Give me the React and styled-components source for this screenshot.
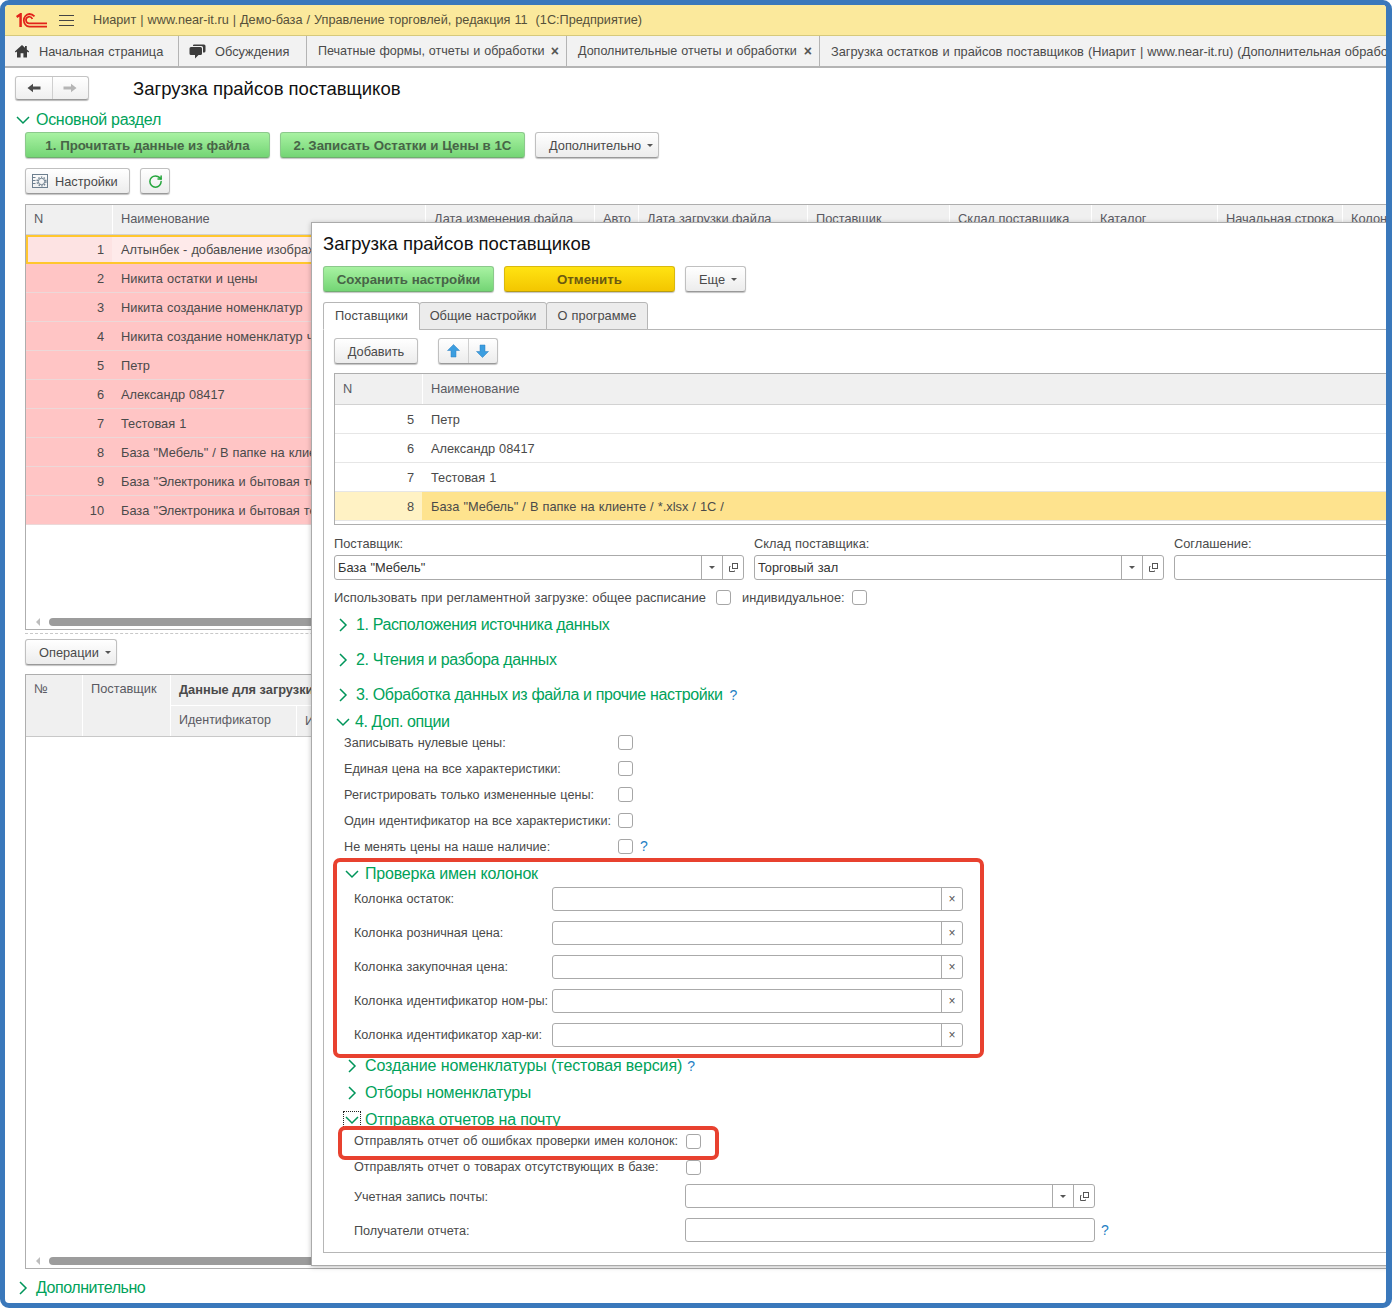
import React from 'react';
import styled, { createGlobalStyle } from 'styled-components';
import { RotateCw } from 'lucide-react';

const Global = createGlobalStyle`
  html, body { margin: 0; padding: 0; background: #fff; }
  * { box-sizing: border-box; }
  body { font-family: "Liberation Sans", Arial, sans-serif; font-size: 12.8px; word-spacing: 0.5px; color: #4a4a4a; }
`;

const Frame = styled.div`
  position: relative; width: 1392px; height: 1308px; overflow: hidden;
  border-style: solid; border-color: #3a78bb; border-width: 5px 6px 5px 5px; border-radius: 9px;
  background: #fff; display: flex; flex-direction: column;
`;
const TitleBar = styled.div`
  height: 31px; flex: none; background: #fbe99c; border-bottom: 1px solid #d6c97c;
  display: flex; align-items: center; padding-left: 11px; color: #55503a; font-size: 12.7px; white-space: pre;
`;
const Logo = styled.svg`width: 31px; height: 15px; flex: none;`;
const Burger = styled.svg`width: 15px; height: 13px; margin: 0 19px 0 12px; flex: none;`;
const TabBar = styled.div`
  height: 32px; flex: none; background: #f2f2f2; border-bottom: 2px solid #b4b4b4; display: flex; white-space: nowrap;
`;
const AppTab = styled.div`
  width: ${p => p.$w}px; flex: none; display: flex; align-items: center; padding-left: ${p => p.$pl}px;
  border-right: 1px solid #b4b4b4; color: #4a4a4a; position: relative; font-size: ${p => p.$fs ?? 12.8}px;
  ${p => p.$last && 'border-right: none; overflow: hidden;'}
`;
const TabIcon = styled.svg`width: ${p => p.$s}px; height: 16px; margin-right: ${p => p.$mr}px; flex: none;`;
const TabClose = styled.span`position: absolute; right: 7px; top: 7px; font-weight: bold; font-size: 14px; color: #555; line-height: 16px;`;

const Body = styled.div`flex: 1; padding-left: 10px; min-height: 0;`;
const NavRow = styled.div`display: flex; align-items: center; height: 24px; margin-top: 8px; gap: 44px;`;
const NavGroup = styled.div`
  width: 74px; height: 24px; display: flex; border: 1px solid #c4c4c4; border-bottom-color: #999; border-radius: 3px;
  background: linear-gradient(#fff, #efefef); box-shadow: 0 1px 1px #bbb;
`;
const NavCell = styled.div`
  flex: 1; display: flex; align-items: center; justify-content: center;
  & + & { border-left: 1px solid #cfcfcf; }
`;
const PageTitle = styled.div`font-size: 18.5px; word-spacing: 0; color: #111; line-height: 24px; white-space: nowrap; padding-top: 1px;`;
const Heading = styled.div`
  position: relative; display: flex; align-items: center; gap: ${p => p.$gap ?? 7}px; height: 20px;
  margin-top: ${p => p.$mt ?? 0}px; margin-left: ${p => p.$ml ?? 0}px;
  color: #00a25a; font-size: 16px; word-spacing: 0; white-space: nowrap; letter-spacing: ${p => p.$ls ?? -0.3}px;
`;
const Chevron = styled.svg`
  width: 14px; height: 14px; margin: 0 -1px; flex: none; fill: none; stroke: #00955a; stroke-width: 1.5;
  ${p => p.$focus && 'outline: 1px dotted #222; outline-offset: 1px;'}
`;
const Hint = styled.span`color: #1f7fc4; font-size: 14px; font-weight: normal; letter-spacing: 0; margin-left: ${p => p.$ml ?? 0}px;`;
const Bar = styled.div`display: flex; gap: 10px; margin-top: ${p => p.$mt}px; margin-left: ${p => p.$ml ?? 10}px; height: 26px;`;
const Button = styled.div`
  width: ${p => p.$w}px; height: 26px; flex: none; display: flex; align-items: center; justify-content: center; gap: ${p => p.$gap ?? 0}px;
  border: 1px solid #c0c0c0; border-bottom-color: #999; border-radius: 3px;
  background: linear-gradient(#fff, #ececec); box-shadow: 0 1px 1px #c4c4c4; color: #4a4a4a; white-space: nowrap;
`;
const StartButton = styled(Button)`justify-content: flex-start; padding-left: ${p => p.$pl ?? 13}px;`;
const GreenButton = styled(Button)`
  background: linear-gradient(#a8f2a2, #74d575); border-color: #8cc98c; border-bottom-color: #6fae6f;
  color: #476447; font-weight: bold; font-size: 13.3px; word-spacing: 0;
`;
const YellowButton = styled(Button)`
  background: linear-gradient(#ffe312, #f3c600); border-color: #d9b90e; border-bottom-color: #b79c10;
  color: #6c5a10; font-weight: bold; font-size: 13.3px;
`;
const Caret = styled.span`
  width: 0; height: 0; border-left: 3px solid transparent; border-right: 3px solid transparent; border-top: 3px solid #555; flex: none;
  margin-left: ${p => p.$ml ?? 6}px;
`;

const Table = styled.div`
  width: 1420px; height: ${p => p.$h}px; margin-top: ${p => p.$mt}px; margin-left: 10px; flex: none;
  border: 1px solid #aeaeae; display: flex; flex-direction: column; background: #fff; white-space: nowrap;
`;
const HeadRow = styled.div`
  display: grid; grid-template-columns: ${p => p.$cols}; height: ${p => p.$h ?? 30}px; flex: none;
  border-bottom: 1px solid #d2d2d2; background: #fff; gap: 1px;
`;
const HeadCell = styled.div`
  background: #f0f0f0; padding-left: 8px; display: flex; align-items: ${p => p.$top ? 'flex-start' : 'center'}; color: #5a5a62; overflow: hidden;
  word-spacing: 0; font-size: ${p => p.$fs ?? 12.8}px;
  ${p => p.$top && 'padding-top: 6px;'}
  ${p => p.$lift && 'padding-bottom: 2px;'}
  ${p => p.$bold && 'font-weight: bold; color: #4a4a4a;'}
  ${p => p.$span && `grid-row: ${p.$span};`}
  ${p => p.$col && `grid-column: ${p.$col};`}
`;
const Row = styled.div`
  display: grid; grid-template-columns: ${p => p.$cols}; height: 29px; flex: none;
  background: ${p => p.$bg ?? '#fff'}; border-bottom: 1px solid ${p => p.$line ?? '#e6e6e6'};
  ${p => p.$current && 'outline: 2px solid #ffc72e; outline-offset: -2px;'}
`;
const NumCell = styled.div`
  display: flex; align-items: center; justify-content: flex-end; padding-right: 8px; color: #4a4a4a;
  background: ${p => p.$bg ?? 'transparent'};
`;
const NameCell = styled.div`
  display: flex; align-items: center; padding-left: 9px; color: #4a4a4a; overflow: hidden;
  background: ${p => p.$bg ?? 'transparent'};
`;
const Scroll = styled.div`display: flex; align-items: center; height: 8px; margin-top: auto; margin-bottom: 3px; padding-left: 10px; flex: none;`;
const ScrollArrow = styled.span`
  width: 0; height: 0; border-top: 4px solid transparent; border-bottom: 4px solid transparent; border-right: 4px solid #bdbdbd; margin-right: 9px;
`;
const Thumb = styled.div`flex: 1; height: 8px; background: #9c9c9c; border-radius: 4px;`;
const Dashed = styled.div`height: 0; width: 1400px; margin: 3px 0 5px 10px; border-top: 1px dashed #c8c8c8;`;
const TwoRowHead = styled(HeadRow)`grid-template-rows: 30px 30px; height: 62px; border-bottom: 1px solid #c8c8c8;`;

const Dialog = styled.div`
  position: absolute; left: 306px; top: 217px; width: 1200px; height: 1044px; background: #fff;
  border: 1px solid #aaa; box-shadow: 0 1px 5px rgba(0,0,0,.25); padding: 10px 0 0 11px; z-index: 5;
`;
const DialogTitle = styled.div`font-size: 18.5px; word-spacing: 0; color: #111; line-height: 22px; white-space: nowrap;`;
const DTabs = styled.div`display: flex; height: 28px; margin-top: 10px; position: relative; z-index: 1; margin-bottom: -1px;`;
const DTab = styled.div`
  width: ${p => p.$w}px; display: flex; align-items: center; justify-content: center; color: #4a4a4a; padding-bottom: 2px;
  border: 1px solid #b6b6b6; border-radius: 3px 3px 0 0; margin-right: -1px; white-space: nowrap;
  background: ${p => p.$active ? '#fff' : '#ececec'}; ${p => p.$active && 'border-bottom-color: #fff;'}
`;
const TabPage = styled.div`border: 1px solid #b6b6b6; height: 924px; padding: 8px 0 0 10px; position: relative;`;
const Toolbar = styled.div`display: flex; gap: 20px; height: 26px;`;
const ArrowGroup = styled.div`
  width: 60px; height: 26px; display: flex; border: 1px solid #c0c0c0; border-bottom-color: #999; border-radius: 3px;
  background: linear-gradient(#fff, #ececec); box-shadow: 0 1px 1px #c4c4c4;
`;
const InnerTable = styled(Table)`width: 1200px; margin-left: 0;`;
const FieldsGrid = styled.div`display: grid; grid-template-columns: 410px 410px 410px; gap: 4px 10px; margin-top: 12px;`;
const FieldLabel = styled.div`height: 14px; line-height: 14px; color: #4a4a4a; white-space: nowrap;`;
const Input = styled.div`
  height: ${p => p.$h ?? 25}px; width: ${p => p.$w ? p.$w + 'px' : 'auto'}; display: flex; align-items: stretch; border: 1px solid #aaa; border-radius: 3px; background: #fff;
  color: #333; flex: none;
`;
const InputText = styled.div`flex: 1; display: flex; align-items: center; padding-left: 3px; white-space: nowrap;`;
const InputBtn = styled.div`
  width: ${p => p.$w ?? 21}px; flex: none; border-left: 1px solid #aaa; display: flex; align-items: center; justify-content: center; color: #555; font-size: 12px;
`;
const Box = styled.span`
  width: 15px; height: 15px; flex: none; border: 1px solid #a6a6a6; border-radius: 3px; background: #fff; display: inline-block;
`;
const CheckLine = styled.div`
  display: flex; align-items: center; height: 16px; margin-top: ${p => p.$mt ?? 0}px; margin-left: ${p => p.$ml ?? 0}px; color: #4a4a4a; white-space: nowrap; position: relative;
`;
const CheckText = styled.span`
  width: ${p => p.$w}px; flex: none; margin-left: ${p => p.$ml ?? 0}px; font-size: ${p => p.$fs ?? 12.65}px;
  ${p => p.$low && 'padding-top: 2px;'}
`;
const Options = styled.div`display: flex; flex-direction: column; gap: 10px; margin-top: 2px;`;
const RedBox = styled.div`
  position: relative; z-index: 2; background: #fff; border: 4px solid #e8412f; border-radius: 7px;
  margin-top: ${p => p.$mt}px; margin-left: ${p => p.$ml}px; width: ${p => p.$w}px; height: ${p => p.$h}px; padding-top: ${p => p.$pt ?? 0}px;
  ${p => p.$center && 'display: flex; align-items: center; padding-bottom: 4px;'}
`;
const ColumnList = styled.div`display: flex; flex-direction: column; gap: 10px; margin-top: 3px;`;
const FormRow = styled.div`
  display: flex; align-items: center; height: 24px; padding-left: ${p => p.$pl}px; margin-top: ${p => p.$mt ?? 0}px; color: #4a4a4a; white-space: nowrap;
`;
const FormLabel = styled.div`width: ${p => p.$w}px; flex: none; font-size: 12.65px; ${p => p.$low && 'padding-top: 2px;'}`;

const ChevronRight = () => <Chevron viewBox="0 0 14 14"><polyline points="4,1 10,7 4,13" /></Chevron>;
const ChevronDown = ({ focus }) => <Chevron $focus={focus} viewBox="0 0 14 14"><polyline points="1,4 7,10 13,4" /></Chevron>;
const OpenIcon = () => (
  <svg width="11" height="11" viewBox="0 0 11 11" fill="none" stroke="#555" strokeWidth="1">
    <rect x="4.5" y="1.5" width="5" height="5" />
    <path d="M2.5 4.5H1.5V9.5H6.5V8.5" />
  </svg>
);
const Arrow = ({ dir, color }) => (
  <svg width="14" height="12" viewBox="0 0 14 12" fill={color}>
    <path d={dir === 'left' ? 'M.5 6L6 1.8V4.6H13.5V7.4H6V10.2Z' : 'M13.5 6L8 1.8V4.6H.5V7.4H8V10.2Z'} />
  </svg>
);
const VArrow = ({ down }) => (
  <svg width="13" height="14" viewBox="0 0 13 14" fill="#3c9ee0" stroke="#2a7fc0" strokeWidth=".5">
    <path d={down ? 'M6.5 13.5L.5 7.5H4V1H9V7.5H12.5Z' : 'M6.5 .5L.5 6.5H4V13H9V6.5H12.5Z'} />
  </svg>
);

const TOP_COLS = '86px 312px 168px 43px 168px 141px 141px 125px 124px 120px';
const TOP_HEAD = ['N', 'Наименование', 'Дата изменения файла', 'Авто', 'Дата загрузки файла', 'Поставщик', 'Склад поставщика', 'Каталог', 'Начальная строка', 'Колонка'];
const TOP_ROWS = [
  'Алтынбек - добавление изображений', 'Никита остатки и цены', 'Никита создание номенклатур', 'Никита создание номенклатур через файл',
  'Петр', 'Александр 08417', 'Тестовая 1', 'База "Мебель" / В папке на клиенте', 'База "Электроника и бытовая техника"', 'База "Электроника и бытовая техника" 2',
];
const INNER_ROWS = [[5, 'Петр'], [6, 'Александр 08417'], [7, 'Тестовая 1'], [8, 'База "Мебель" / В папке на клиенте / *.xlsx / 1С /']];
const OPTIONS = ['Записывать нулевые цены:', 'Единая цена на все характеристики:', 'Регистрировать только измененные цены:', 'Один идентификатор на все характеристики:', 'Не менять цены на наше наличие:'];
const COLUMNS = ['Колонка остаток:', 'Колонка розничная цена:', 'Колонка закупочная цена:', 'Колонка идентификатор ном-ры:', 'Колонка идентификатор хар-ки:'];

export default function App() {
  return (
    <Frame>
      <Global />
      <TitleBar>
        <Logo viewBox="0 0 31 15" fill="none" stroke="#e2231a">
          <path d="M.6 4L4.6 1.3V14" strokeWidth="2.5" />
          <path d="M18.5 3.4C17 1.8 15.2 1 13.4 1A6.4 6.4 0 0 0 13.4 13.7H31" strokeWidth="1.8" />
          <path d="M16.4 6A3.3 3.3 0 1 0 13.6 10.4H31" strokeWidth="1.7" />
        </Logo>
        <Burger viewBox="0 0 15 13" stroke="#444" strokeWidth="1.2">
          <path d="M0 1.5H15M0 6.5H15M0 11.5H15" />
        </Burger>
        {'Ниарит | www.near-it.ru | Демо-база / Управление торговлей, редакция 11  (1С:Предприятие)'}
      </TitleBar>
      <TabBar>
        <AppTab $w={174} $pl={9}>
          <TabIcon $s={16} $mr={9} viewBox="0 0 16 16" fill="#3c3c3c"><path d="M8 2L.8 8.6 1.8 9.6 3 8.6V14.5H6.6V10.2H9.4V14.5H13V8.6L14.2 9.6 15.2 8.6 12.8 6.4V3H11V4.8Z" /></TabIcon>
          Начальная страница
        </AppTab>
        <AppTab $w={128} $pl={10}>
          <TabIcon $s={17} $mr={9} viewBox="0 0 17 16" fill="#3c3c3c">
            <path d="M5 1.5H15A1.5 1.5 0 0 1 16.5 3V8A1.5 1.5 0 0 1 15 9.5H14V4.5A1.5 1.5 0 0 0 12.5 3H4V2.5A1 1 0 0 1 5 1.5Z" />
            <path d="M2 4H11.5A1.5 1.5 0 0 1 13 5.5V10.5A1.5 1.5 0 0 1 11.5 12H9.5L6 15.5V12H2A1.5 1.5 0 0 1 .5 10.5V5.5A1.5 1.5 0 0 1 2 4Z" />
          </TabIcon>
          Обсуждения
        </AppTab>
        <AppTab $w={260} $pl={11} $fs={12.55}>Печатные формы, отчеты и обработки<TabClose>×</TabClose></AppTab>
        <AppTab $w={253} $pl={11} $fs={12.55}>Дополнительные отчеты и обработки<TabClose>×</TabClose></AppTab>
        <AppTab $w={566} $pl={11} $last>Загрузка остатков и прайсов поставщиков (Ниарит | www.near-it.ru) (Дополнительная обработка)</AppTab>
      </TabBar>
      <Body>
        <NavRow>
          <NavGroup>
            <NavCell><Arrow dir="left" color="#4a4a4a" /></NavCell>
            <NavCell><Arrow dir="right" color="#b5b5b5" /></NavCell>
          </NavGroup>
          <PageTitle>Загрузка прайсов поставщиков</PageTitle>
        </NavRow>
        <Heading $mt={10} $ml={2}><ChevronDown />Основной раздел</Heading>
        <Bar $mt={2}>
          <GreenButton $w={245}>1. Прочитать данные из файла</GreenButton>
          <GreenButton $w={245}>2. Записать Остатки и Цены в 1С</GreenButton>
          <StartButton $w={124}>Дополнительно<Caret /></StartButton>
        </Bar>
        <Bar $mt={10}>
          <StartButton $w={105} $pl={5} $gap={6}>
            <svg width="18" height="16" viewBox="0 0 18 16" fill="none" stroke="#6d7f8f" strokeWidth="1">
              <rect x="1.5" y="1.5" width="15" height="13" />
              <path d="M1.5 4.5H4.5M1.5 7.5H4.5M1.5 10.5H4.5" />
              <circle cx="10.5" cy="8.5" r="3.2" />
              <circle cx="10.5" cy="8.5" r="4.4" strokeWidth="1.4" strokeDasharray="1.4 1.4" />
            </svg>
            Настройки
          </StartButton>
          <Button $w={30}><RotateCw size={15} color="#25a63c" strokeWidth={2.4} /></Button>
        </Bar>
        <Table $h={426} $mt={10}>
          <HeadRow $cols={TOP_COLS}>
            {TOP_HEAD.map(t => <HeadCell key={t} $lift>{t}</HeadCell>)}
          </HeadRow>
          {TOP_ROWS.map((t, i) => (
            <Row key={t} $cols="86px 1fr" $bg="#ffc5c5" $line="#ecd8d8" $current={i === 0}>
              <NumCell $bg={i === 0 ? '#fde3e3' : undefined}>{i + 1}</NumCell>
              <NameCell $bg={i === 0 ? '#feeaea' : undefined}>{t}</NameCell>
            </Row>
          ))}
          <Scroll><ScrollArrow /><Thumb /></Scroll>
        </Table>
        <Dashed />
        <Bar $mt={0}>
          <StartButton $w={92}>Операции<Caret /></StartButton>
        </Bar>
        <Table $h={595} $mt={9}>
          <TwoRowHead $cols="56px 87px 125px 125px 125px 125px">
            <HeadCell $top $span="1 / 3">№</HeadCell>
            <HeadCell $top $span="1 / 3">Поставщик</HeadCell>
            <HeadCell $bold $lift $col="3 / 7">Данные для загрузки</HeadCell>
            <HeadCell $lift $fs={12.5} $col="3 / 4">Идентификатор</HeadCell>
            <HeadCell $lift>Имя</HeadCell>
          </TwoRowHead>
          <Scroll><ScrollArrow /><Thumb /></Scroll>
        </Table>
        <Heading $mt={9} $ml={2} $ls={-0.45}><ChevronRight />Дополнительно</Heading>
      </Body>

      <Dialog>
        <DialogTitle>Загрузка прайсов поставщиков</DialogTitle>
        <Bar $mt={11} $ml={0}>
          <GreenButton $w={171}>Сохранить настройки</GreenButton>
          <YellowButton $w={171}>Отменить</YellowButton>
          <StartButton $w={61}>Еще<Caret /></StartButton>
        </Bar>
        <DTabs>
          <DTab $w={97} $active>Поставщики</DTab>
          <DTab $w={128}>Общие настройки</DTab>
          <DTab $w={102}>О программе</DTab>
        </DTabs>
        <TabPage>
          <Toolbar>
            <Button $w={84}>Добавить</Button>
            <ArrowGroup>
              <NavCell><VArrow /></NavCell>
              <NavCell><VArrow down /></NavCell>
            </ArrowGroup>
          </Toolbar>
          <InnerTable $h={152} $mt={9}>
            <HeadRow $cols="87px 1fr" $h={31}>
              <HeadCell $lift>N</HeadCell>
              <HeadCell $lift>Наименование</HeadCell>
            </HeadRow>
            {INNER_ROWS.map(([n, t]) => (
              <Row key={n} $cols="87px 1fr" $bg={n === 8 ? '#fee38e' : '#fff'}>
                <NumCell $bg={n === 8 ? '#fff2c4' : undefined}>{n}</NumCell>
                <NameCell>{t}</NameCell>
              </Row>
            ))}
          </InnerTable>
          <FieldsGrid>
            <FieldLabel>Поставщик:</FieldLabel>
            <FieldLabel>Склад поставщика:</FieldLabel>
            <FieldLabel>Соглашение:</FieldLabel>
            <Input>
              <InputText>База "Мебель"</InputText>
              <InputBtn><Caret $ml={0} /></InputBtn>
              <InputBtn><OpenIcon /></InputBtn>
            </Input>
            <Input>
              <InputText>Торговый зал</InputText>
              <InputBtn><Caret $ml={0} /></InputBtn>
              <InputBtn><OpenIcon /></InputBtn>
            </Input>
            <Input />
          </FieldsGrid>
          <CheckLine $mt={9}>
            <CheckText $w={382} $fs={12.9}>Использовать при регламентной загрузке: общее расписание</CheckText>
            <Box />
            <CheckText $w={110} $ml={11} $fs={12.8}>индивидуальное:</CheckText>
            <Box />
          </CheckLine>
          <Heading $mt={10} $ml={3} $ls={-0.38}><ChevronRight />1. Расположения источника данных</Heading>
          <Heading $mt={15} $ml={3} $ls={-0.33}><ChevronRight />2. Чтения и разбора данных</Heading>
          <Heading $mt={15} $ml={3} $ls={-0.35}><ChevronRight />3. Обработка данных из файла и прочие настройки<Hint>?</Hint></Heading>
          <Heading $mt={7} $ml={3} $ls={-0.4} $gap={6}><ChevronDown />4. Доп. опции</Heading>
          <Options>
            {OPTIONS.map((t, i) => (
              <CheckLine key={t} $ml={10}>
                <CheckText $w={274} $low>{t}</CheckText>
                <Box />
                {i === 4 && <Hint $ml={7}>?</Hint>}
              </CheckLine>
            ))}
          </Options>
          <RedBox $mt={4} $ml={-1} $w={651} $h={200} $pt={2}>
            <Heading $ml={9} $ls={-0.2}><ChevronDown />Проверка имен колонок</Heading>
            <ColumnList>
              {COLUMNS.map(t => (
                <FormRow key={t} $pl={17}>
                  <FormLabel $w={198}>{t}</FormLabel>
                  <Input $w={411} $h={24}>
                    <InputText />
                    <InputBtn>×</InputBtn>
                  </Input>
                </FormRow>
              ))}
            </ColumnList>
          </RedBox>
          <Heading $mt={-2} $ml={12} $ls={-0.1}><ChevronRight />Создание номенклатуры (тестовая версия)<Hint $ml={-2}>?</Hint></Heading>
          <Heading $mt={7} $ml={12} $ls={-0.2}><ChevronRight />Отборы номенклатуры</Heading>
          <Heading $mt={7} $ml={12} $ls={-0.2}><ChevronDown focus />Отправка отчетов на почту</Heading>
          <RedBox $mt={-4} $ml={4} $w={381} $h={34} $center>
            <CheckLine $ml={12}>
              <CheckText $w={332}>Отправлять отчет об ошибках проверки имен колонок:</CheckText>
              <Box />
            </CheckLine>
          </RedBox>
          <CheckLine $mt={-1} $ml={20}>
            <CheckText $w={332}>Отправлять отчет о товарах отсутствующих в базе:</CheckText>
            <Box />
          </CheckLine>
          <FormRow $pl={20} $mt={9}>
            <FormLabel $w={331} $low>Учетная запись почты:</FormLabel>
            <Input $w={410} $h={24}>
              <InputText />
              <InputBtn><Caret $ml={0} /></InputBtn>
              <InputBtn><OpenIcon /></InputBtn>
            </Input>
          </FormRow>
          <FormRow $pl={20} $mt={10}>
            <FormLabel $w={331} $low>Получатели отчета:</FormLabel>
            <Input $w={410} $h={24} />
            <Hint $ml={6}>?</Hint>
          </FormRow>
        </TabPage>
      </Dialog>
    </Frame>
  );
}
